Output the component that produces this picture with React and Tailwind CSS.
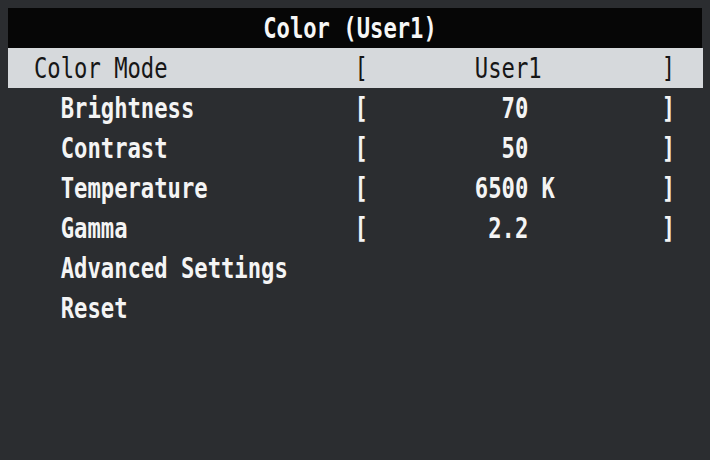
import React from "react";

const rows = [
  { label: "Color Mode", value: "User1", pad: 8, sub: false, active: true },
  { label: "Brightness", value: "70", pad: 10, sub: true },
  { label: "Contrast", value: "50", pad: 10, sub: true },
  { label: "Temperature", value: "6500 K", pad: 8, sub: true },
  { label: "Gamma", value: "2.2", pad: 9, sub: true },
  { label: "Advanced Settings", sub: true },
  { label: "Reset", sub: true },
];

export default function App() {
  return (
    <div className="w-[710px] h-[460px] overflow-hidden bg-[#2b2d30] pt-2 font-['DejaVu_Sans_Mono',monospace] text-[22.2px] leading-none">
      <div className="mx-2 h-10 bg-[#060606] flex items-center justify-center pr-[10px] text-[#f6f6f6] font-bold">
        <span className="inline-block scale-y-125 whitespace-pre">Color (User1)</span>
      </div>
      <div className="ml-2 mr-[7px]">
        {rows.map((r) => (
          <div
            key={r.label}
            className={
              r.active
                ? "h-10 flex items-center pl-[26px] bg-[#d6d9dc] text-[#161616] font-normal"
                : "h-10 flex items-center pl-[26px] text-[#f4f4f4] font-bold"
            }
          >
            <div className="flex whitespace-pre scale-y-125">
              <span className="w-[24ch]">{(r.sub ? "  " : "") + r.label}</span>
              {r.value && (
                <>
                  <span>[</span>
                  <span className="w-[22ch]">{" ".repeat(r.pad) + r.value}</span>
                  <span>]</span>
                </>
              )}
            </div>
          </div>
        ))}
      </div>
    </div>
  );
}
